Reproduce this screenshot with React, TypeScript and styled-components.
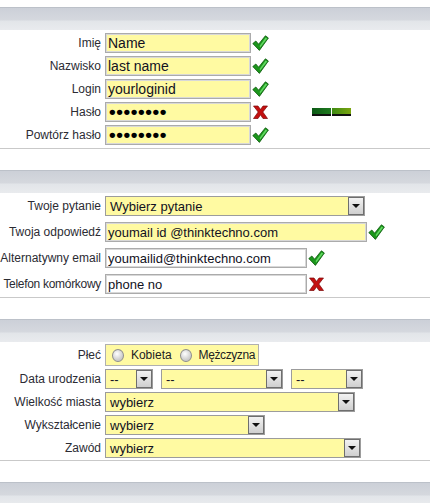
import styled, { createGlobalStyle } from "styled-components";

const GlobalStyle = createGlobalStyle`
  html, body {
    margin: 0;
    padding: 0;
    background: #ffffff;
  }
  body {
    font-family: "Liberation Sans", Arial, sans-serif;
    width: 430px;
    overflow: hidden;
  }
`;

const Page = styled.div`
  padding-top: 7px;
  display: flex;
  flex-direction: column;
`;

const Section = styled.section<{ $gap: number; $pad: number }>`
  display: flex;
  flex-direction: column;
  gap: ${(p) => p.$gap}px;
  padding: ${(p) => p.$pad}px 0 ${(p) => p.$pad}px;
  border-bottom: 1px solid #c9c9c9;
  margin-bottom: 21px;
`;

const HeaderBar = styled.div`
  height: 23px;
  border-top: 1px solid #bcc1c9;
  box-sizing: border-box;
  background: linear-gradient(
    to bottom,
    #ccd0d8 0px,
    #d5d8de 12px,
    #e2e5e9 13px,
    #e9ebee 22px
  );
`;

const Row = styled.div`
  display: grid;
  grid-template-columns: 101px auto;
  column-gap: 4px;
  align-items: center;
  justify-content: start;
`;

const Label = styled.label<{ $tight?: boolean }>`
  font-size: 12px;
  color: #2b2b33;
  text-align: right;
  white-space: nowrap;
  letter-spacing: ${(p) => (p.$tight ? "-0.3px" : "0")};
`;

const Controls = styled.div`
  display: flex;
  align-items: center;
  gap: 1px;
`;

const TextBox = styled.input<{ $w: number; $yellow?: boolean; $size?: number }>`
  box-sizing: border-box;
  width: ${(p) => p.$w}px;
  height: 20px;
  margin: 0;
  padding: 0 2px;
  border: 1px solid #ababab;
  box-shadow: inset 0 0 0 1px #d8d8d8;
  background: ${(p) => (p.$yellow ? "#fffaa2" : "#ffffff")};
  font-family: "Liberation Sans", Arial, sans-serif;
  font-size: ${(p) => p.$size ?? 13}px;
  color: #111122;
  outline: none;
`;

const Dots = styled(TextBox)`
  font-size: 19px;
  font-weight: bold;
  letter-spacing: 0.6px;
  padding-left: 3px;
  color: #000;
`;

const SelectBox = styled.div<{ $w: number }>`
  box-sizing: border-box;
  width: ${(p) => p.$w}px;
  height: 20px;
  display: flex;
  align-items: stretch;
  border: 1px solid #9c9c9c;
  background: #fffaa2;
  font-size: 13px;
  color: #111122;
`;

const SelectText = styled.span`
  flex: 1;
  display: flex;
  align-items: center;
  padding-left: 4px;
  white-space: nowrap;
  overflow: hidden;
`;

const SelectButton = styled.span`
  width: 16px;
  box-sizing: border-box;
  border: 1px solid #6e6e6e;
  background: linear-gradient(to bottom, #f2f2f2, #cfcfcf);
  display: flex;
  align-items: center;
  justify-content: center;
  &::after {
    content: "";
    border-left: 4px solid transparent;
    border-right: 4px solid transparent;
    border-top: 4px solid #111;
  }
`;

const Inline = styled.div`
  display: flex;
  gap: 8px;
`;

const RadioGroup = styled.div`
  box-sizing: border-box;
  width: 154px;
  height: 22px;
  border: 1px solid #b0b0b0;
  background: #fffaa2;
  display: flex;
  align-items: center;
  padding-left: 6px;
  gap: 5px;
  font-size: 12px;
  color: #222;
`;

const Radio = styled.span`
  width: 11px;
  height: 11px;
  border-radius: 50%;
  border: 1px solid #8e8e8e;
  background: radial-gradient(circle at 40% 35%, #ffffff, #c9c9c9 70%);
  margin-right: 2px;
`;

const RadioLabel = styled.span<{ $tight?: boolean }>`
  letter-spacing: ${(p) => (p.$tight ? "-0.4px" : "0")};
  margin-right: 3px;
`;

const Strength = styled.div`
  display: flex;
  gap: 1px;
  margin-left: 42px;
`;

const Bar = styled.span<{ $from: string; $to: string }>`
  width: 19px;
  height: 6px;
  background: linear-gradient(to right, ${(p) => p.$from}, ${(p) => p.$to});
  border-bottom: 2px solid #111;
`;

function Check() {
  return (
    <svg width="17" height="16" viewBox="0 0 17 16">
      <path
        d="M0.8 8.6 L3.8 6 L6.6 9.2 L13.4 0.8 L16.4 3 L7.4 15.4 Z"
        fill="#1c961c"
        stroke="#0b570b"
        strokeWidth="0.8"
        strokeLinejoin="round"
      />
      <path d="M7.6 11 L13.6 2.4 L15.2 3.4 L8.2 12.6 Z" fill="#62d862" />
    </svg>
  );
}

function Cross() {
  return (
    <svg width="17" height="16" viewBox="0 0 17 16">
      <path
        d="M1.5 2 L6 2 L8.5 5.5 L11 2 L15.5 2 L10.8 8 L15.5 14.5 L11 14.5 L8.5 10.8 L6 14.5 L1.5 14.5 L6.2 8 Z"
        fill="#c41010"
        stroke="#7a0606"
        strokeWidth="0.7"
        strokeLinejoin="round"
      />
    </svg>
  );
}

function Select({ w, value }: { w: number; value: string }) {
  return (
    <SelectBox $w={w}>
      <SelectText>{value}</SelectText>
      <SelectButton />
    </SelectBox>
  );
}

export default function App() {
  return (
    <>
      <GlobalStyle />
      <Page>
        <HeaderBar />
        <Section $gap={3} $pad={3}>
          <Row>
            <Label>Imię</Label>
            <Controls>
              <TextBox $w={146} $yellow $size={14} value="Name" readOnly />
              <Check />
            </Controls>
          </Row>
          <Row>
            <Label>Nazwisko</Label>
            <Controls>
              <TextBox $w={146} $yellow $size={14} value="last name" readOnly />
              <Check />
            </Controls>
          </Row>
          <Row>
            <Label>Login</Label>
            <Controls>
              <TextBox $w={146} $yellow $size={14} value="yourloginid" readOnly />
              <Check />
            </Controls>
          </Row>
          <Row>
            <Label>Hasło</Label>
            <Controls>
              <Dots $w={146} $yellow value="••••••••" readOnly />
              <Cross />
              <Strength>
                <Bar $from="#0c5a16" $to="#1f7a1f" />
                <Bar $from="#3d8a12" $to="#7ba510" />
              </Strength>
            </Controls>
          </Row>
          <Row>
            <Label>Powtórz hasło</Label>
            <Controls>
              <Dots $w={146} $yellow value="••••••••" readOnly />
              <Check />
            </Controls>
          </Row>
        </Section>

        <HeaderBar />
        <Section $gap={6} $pad={3}>
          <Row>
            <Label>Twoje pytanie</Label>
            <Controls>
              <Select w={260} value="Wybierz pytanie" />
            </Controls>
          </Row>
          <Row>
            <Label>Twoja odpowiedź</Label>
            <Controls>
              <TextBox $w={262} $yellow value="youmail id @thinktechno.com" readOnly />
              <Check />
            </Controls>
          </Row>
          <Row>
            <Label>Alternatywny email</Label>
            <Controls>
              <TextBox $w={202} value="youmailid@thinktechno.com" readOnly />
              <Check />
            </Controls>
          </Row>
          <Row>
            <Label $tight>Telefon komórkowy</Label>
            <Controls>
              <TextBox $w={202} value="phone no" readOnly />
              <Cross />
            </Controls>
          </Row>
        </Section>

        <HeaderBar />
        <Section $gap={3} $pad={2}>
          <Row>
            <Label>Płeć</Label>
            <Controls>
              <RadioGroup>
                <Radio />
                <RadioLabel>Kobieta</RadioLabel>
                <Radio />
                <RadioLabel $tight>Mężczyzna</RadioLabel>
              </RadioGroup>
            </Controls>
          </Row>
          <Row>
            <Label>Data urodzenia</Label>
            <Inline>
              <Select w={48} value="--" />
              <Select w={122} value="--" />
              <Select w={72} value="--" />
            </Inline>
          </Row>
          <Row>
            <Label>Wielkość miasta</Label>
            <Controls>
              <Select w={250} value="wybierz" />
            </Controls>
          </Row>
          <Row>
            <Label>Wykształcenie</Label>
            <Controls>
              <Select w={160} value="wybierz" />
            </Controls>
          </Row>
          <Row>
            <Label>Zawód</Label>
            <Controls>
              <Select w={256} value="wybierz" />
            </Controls>
          </Row>
        </Section>

        <HeaderBar />
      </Page>
    </>
  );
}
